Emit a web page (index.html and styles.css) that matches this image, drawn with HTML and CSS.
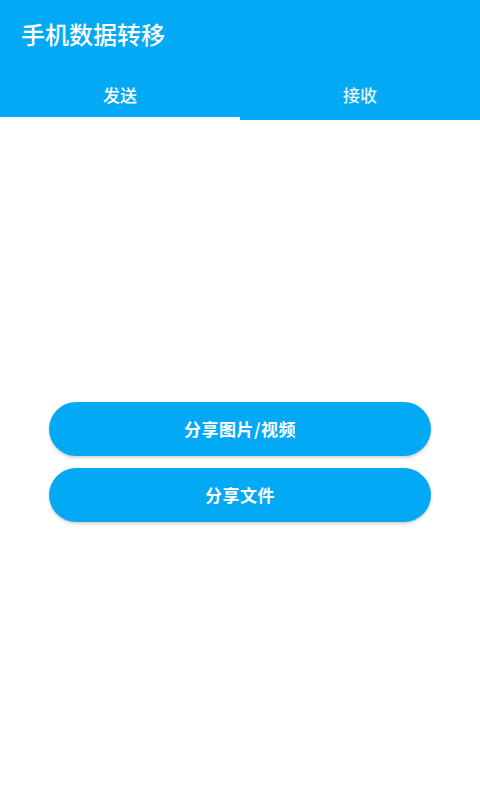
FILE: index.html
```html
<!DOCTYPE html>
<html lang="zh-CN">
<head>
<meta charset="utf-8">
<title>手机数据转移</title>
<link rel="stylesheet" href="styles.css">
</head>
<body>
<header class="appbar">
  <div class="title">手机数据转移</div>
  <nav class="tabs">
    <div class="tab active">发送</div>
    <div class="tab">接收</div>
  </nav>
</header>
<main class="content">
  <button class="btn">分享图片/视频</button>
  <button class="btn">分享文件</button>
</main>
</body>
</html>
```
FILE: styles.css
```css
* { box-sizing: border-box; }
html, body { margin: 0; padding: 0; }
body {
  width: 480px;
  height: 800px;
  background: #ffffff;
  font-family: "Noto Sans CJK SC", "Noto Sans", sans-serif;
  overflow: hidden;
}
.appbar {
  background: #03a9f4;
  color: #ffffff;
}
.title {
  height: 70px;
  display: flex;
  align-items: center;
  padding-left: 21px;
  padding-bottom: 3px;
  font-size: 24px;
  font-weight: 500;
}
.tabs {
  display: flex;
  height: 50px;
}
.tab {
  flex: 1;
  display: flex;
  align-items: center;
  justify-content: center;
  font-size: 17px;
  font-weight: 500;
  color: rgba(255,255,255,0.92);
  border-bottom: 3px solid transparent;
  padding-top: 1px;
}
.tab.active {
  color: #ffffff;
  border-bottom-color: #ffffff;
}
.content {
  height: 680px;
  display: flex;
  flex-direction: column;
  justify-content: center;
  align-items: center;
  gap: 12px;
  padding-top: 3px;
}
.btn {
  width: 382px;
  height: 54px;
  border: none;
  border-radius: 27px;
  background: #03a9f4;
  color: #ffffff;
  font-family: "Noto Sans CJK SC", "Noto Sans", sans-serif;
  font-size: 17px;
  font-weight: 700;
  letter-spacing: 0.5px;
  box-shadow: 0 2px 3px rgba(0,0,0,0.18);
}
```
